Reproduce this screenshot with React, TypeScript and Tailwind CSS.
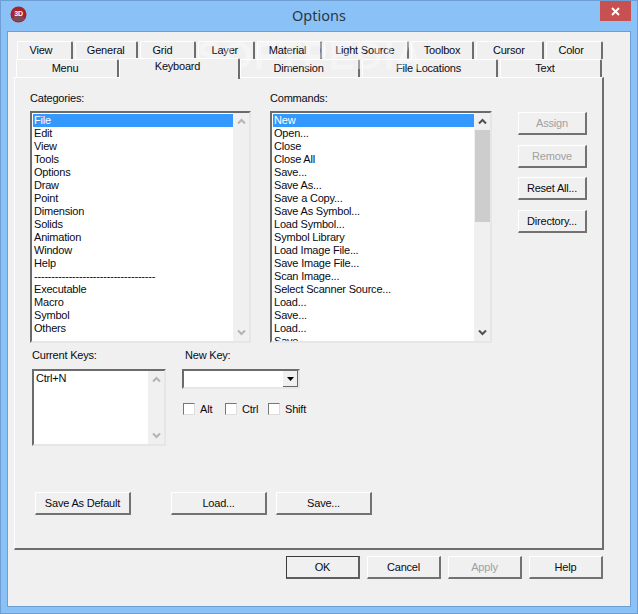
import React from 'react';

const categories = ['File', 'Edit', 'View', 'Tools', 'Options', 'Draw', 'Point', 'Dimension', 'Solids', 'Animation', 'Window', 'Help', '-----------------------------------', 'Executable', 'Macro', 'Symbol', 'Others'];
const commands = ['New', 'Open...', 'Close', 'Close All', 'Save...', 'Save As...', 'Save a Copy...', 'Save As Symbol...', 'Load Symbol...', 'Symbol Library', 'Load Image File...', 'Save Image File...', 'Scan Image...', 'Select Scanner Source...', 'Load...', 'Save...', 'Load...', 'Save...'];

const topTabs = [
  { label: 'View', w: 'w-[56px] pr-[7px]' },
  { label: 'General', w: 'w-[63px]' },
  { label: 'Grid', w: 'w-[57px] pr-[10px]' },
  { label: 'Layer', w: 'w-[57px] pr-[3px]' },
  { label: 'Material', w: 'w-[65px] pr-[3px]' },
  { label: 'Light Source', w: 'w-[85px] pr-[2px]' },
  { label: 'Toolbox', w: 'w-[64px]' },
  { label: 'Cursor', w: 'w-[68px] pr-[2px]' },
  { label: 'Color', w: 'w-[57px] pr-[6px]' },
];

function Tab({ label, w, active }: { label: string; w: string; active?: boolean }) {
  return (
    <div className={`${w} flex items-center justify-center bg-[#f0f0f0] border-t border-l border-white border-r-2 border-r-[#6e6e6e] rounded-t-[2px] ${active ? 'h-[21px] -mt-[1px] -mb-[2px] pb-[5px] relative z-10' : 'h-[18px]'}`}>
      {label}
    </div>
  );
}

function Chevron({ up, color }: { up?: boolean; color: string }) {
  return (
    <svg width="9" height="7" viewBox="0 0 9 7" className="block">
      <polyline points={up ? '1,5.5 4.5,2 8,5.5' : '1,1.5 4.5,5 8,1.5'} fill="none" stroke={color} strokeWidth="2" />
    </svg>
  );
}

function ScrollBar({ active, thumb }: { active?: boolean; thumb?: boolean }) {
  const color = active ? '#505050' : '#b4b4b4';
  return (
    <div className="w-[16px] shrink-0 bg-[#f0f0f0] flex flex-col items-center">
      <div className="h-[17px] w-full flex items-center justify-center"><Chevron up color={color} /></div>
      {thumb ? <div className="w-[15px] h-[92px] bg-[#cdcdcd]" /> : null}
      <div className="flex-1" />
      <div className="h-[17px] w-full flex items-center justify-center"><Chevron color={color} /></div>
    </div>
  );
}

function ListBox({ items, w, h, active, thumb, selected }: { items: string[]; w: string; h: string; active?: boolean; thumb?: boolean; selected?: boolean }) {
  return (
    <div className={`${w} ${h} flex bg-white border-2 border-t-[#6b6b6b] border-l-[#6b6b6b] border-r-[#e6e6e6] border-b-[#e6e6e6] overflow-hidden`}>
      <div className="flex-1 min-w-0 pt-[1px] pl-[1px] overflow-hidden">
        {items.map((item, i) => (
          <div key={i} className={`h-[13px] leading-[13px] pl-[1px] whitespace-nowrap ${selected && i === 0 ? 'bg-[#3399ff] text-white' : ''}`}>{item}</div>
        ))}
      </div>
      <ScrollBar active={active} thumb={thumb} />
    </div>
  );
}

function Btn({ label, w, disabled, primary }: { label: string; w: string; disabled?: boolean; primary?: boolean }) {
  return (
    <div className={`${w} flex items-center justify-center bg-[#f0f0f0] ${primary ? 'h-[23px] border border-[#3c3c3c] border-b-2 border-r-2 border-b-[#5e5e5e] border-r-[#5e5e5e]' : 'h-[23px] border-t border-l border-white border-r-2 border-b-2 border-r-[#727272] border-b-[#727272]'} ${disabled ? 'text-[#a0a0a0]' : ''}`}>
      {label}
    </div>
  );
}

function Check({ label, w }: { label: string; w: string }) {
  return (
    <div className={`${w} flex items-center gap-[5px]`}>
      <div className="w-[12px] h-[12px] bg-white border border-t-[#777777] border-l-[#777777] border-r-[#dddddd] border-b-[#dddddd]" />
      <span>{label}</span>
    </div>
  );
}

export default function App() {
  return (
    <div className="relative w-[638px] h-[614px] overflow-hidden bg-[#8ac2f8] border border-[#6f9fd2] flex flex-col text-[11px] tracking-[-0.2px] text-[#0a0a14] font-['Liberation_Sans',Arial,sans-serif]">
      {/* title bar */}
      <div className="h-[30px] shrink-0 grid grid-cols-3">
        <div className="pl-[9px] pt-[5px]">
          <svg width="17" height="17" viewBox="0 0 17 17" className="block">
            <circle cx="8.5" cy="8.5" r="8" fill="#a8222c" />
            <ellipse cx="8.5" cy="12.5" rx="6" ry="3" fill="#7d4a58" />
            <text x="8.5" y="10" textAnchor="middle" fontSize="7" fontWeight="700" fill="#ffffff" fontFamily="Liberation Sans">3D</text>
          </svg>
        </div>
        <div className="flex items-center justify-center text-[14.5px] tracking-normal text-[#2a3844] font-['Noto_Sans',sans-serif]">Options</div>
        <div className="flex justify-end pr-[6px]">
          <div className="w-[31px] h-[20px] bg-[#c75050] flex items-center justify-center">
            <svg width="9" height="9" viewBox="0 0 9 9" className="block">
              <path d="M1 1 L8 8 M8 1 L1 8" stroke="#ffffff" strokeWidth="2" />
            </svg>
          </div>
        </div>
      </div>

      {/* client area */}
      <div className="mx-[6px] h-[576px] shrink-0 bg-[#f0f0f0] border border-[#6f9fd2] pt-[9px] pl-[6px]">
        <div className="w-[590px]">
          <div className="flex gap-[2px] pl-[3px] w-[589px]">
            {topTabs.map(t => <Tab key={t.label} label={t.label} w={t.w} />)}
          </div>
          <div className="flex pl-[2px] h-[18px] items-start">
            <Tab label="Menu" w="w-[103px] pr-[4px]" />
            <Tab label="Keyboard" w="w-[121px] pr-[3px]" active />
            <Tab label="Dimension" w="w-[120px] pr-[2px]" />
            <div className="w-[2px]" />
            <Tab label="File Locations" w="w-[136px] pr-[2px]" />
            <div className="w-[2px]" />
            <Tab label="Text" w="w-[102px] pr-[11px]" />
          </div>

          {/* page */}
          <div className="h-[473px] bg-[#f0f0f0] border-t border-l border-white border-r-2 border-b-2 border-r-[#6e6e6e] border-b-[#6e6e6e] pl-[15px] pt-[14px]">
            <div className="flex">
              <div className="w-[221px] mr-[19px]">
                <div className="h-[19px] leading-[13px]">Categories:</div>
                <ListBox items={categories} w="w-[221px]" h="h-[232px]" active={false} selected />
              </div>
              <div className="w-[222px] mr-[26px]">
                <div className="h-[19px] leading-[13px]">Commands:</div>
                <ListBox items={commands} w="w-[222px]" h="h-[232px]" active thumb selected />
              </div>
              <div className="w-[69px] pt-[20px] flex flex-col">
                <Btn label="Assign" w="w-[69px]" disabled />
                <div className="h-[10px]" />
                <Btn label="Remove" w="w-[69px]" disabled />
                <div className="h-[9px]" />
                <Btn label="Reset All..." w="w-[69px]" />
                <div className="h-[10px]" />
                <Btn label="Directory..." w="w-[69px]" />
              </div>
            </div>

            <div className="flex mt-[6px] pl-[2px]">
              <div className="w-[134px] mr-[16px]">
                <div className="h-[20px] leading-[13px]">Current Keys:</div>
                <ListBox items={['Ctrl+N']} w="w-[134px]" h="h-[77px]" />
              </div>
              <div>
                <div className="h-[20px] leading-[13px] pl-[3px]">New Key:</div>
                <div className="w-[118px] h-[20px] flex bg-white border-2 border-t-[#6b6b6b] border-l-[#6b6b6b] border-r-[#e6e6e6] border-b-[#e6e6e6]">
                  <div className="flex-1" />
                  <div className="w-[15px] h-[16px] bg-[#f0f0f0] border-r border-b border-[#666666] flex items-center justify-center">
                    <svg width="7" height="4" viewBox="0 0 7 4" className="block"><path d="M0 0 H7 L3.5 4 Z" fill="#000000" /></svg>
                  </div>
                </div>
                <div className="flex mt-[12px] pl-[1px]">
                  <Check label="Alt" w="w-[42px]" />
                  <Check label="Ctrl" w="w-[43px]" />
                  <Check label="Shift" w="w-[50px]" />
                </div>
              </div>
            </div>

            <div className="flex mt-[46px] pl-[5px]">
              <Btn label="Save As Default" w="w-[96px]" />
              <div className="w-[40px]" />
              <Btn label="Load..." w="w-[96px]" />
              <div className="w-[9px]" />
              <Btn label="Save..." w="w-[96px]" />
            </div>
          </div>

          <div className="flex justify-end gap-[7px] mt-[6px] pr-[1px]">
            <Btn label="OK" w="w-[74px]" primary />
            <Btn label="Cancel" w="w-[74px]" />
            <Btn label="Apply" w="w-[74px]" disabled />
            <Btn label="Help" w="w-[74px]" />
          </div>
        </div>
      </div>

      {/* softpedia watermark */}
      <div className="absolute left-[196px] top-[36px] text-[38px] leading-[38px] font-bold tracking-[1px] text-white/35 pointer-events-none">SOFTPEDIA</div>
    </div>
  );
}
